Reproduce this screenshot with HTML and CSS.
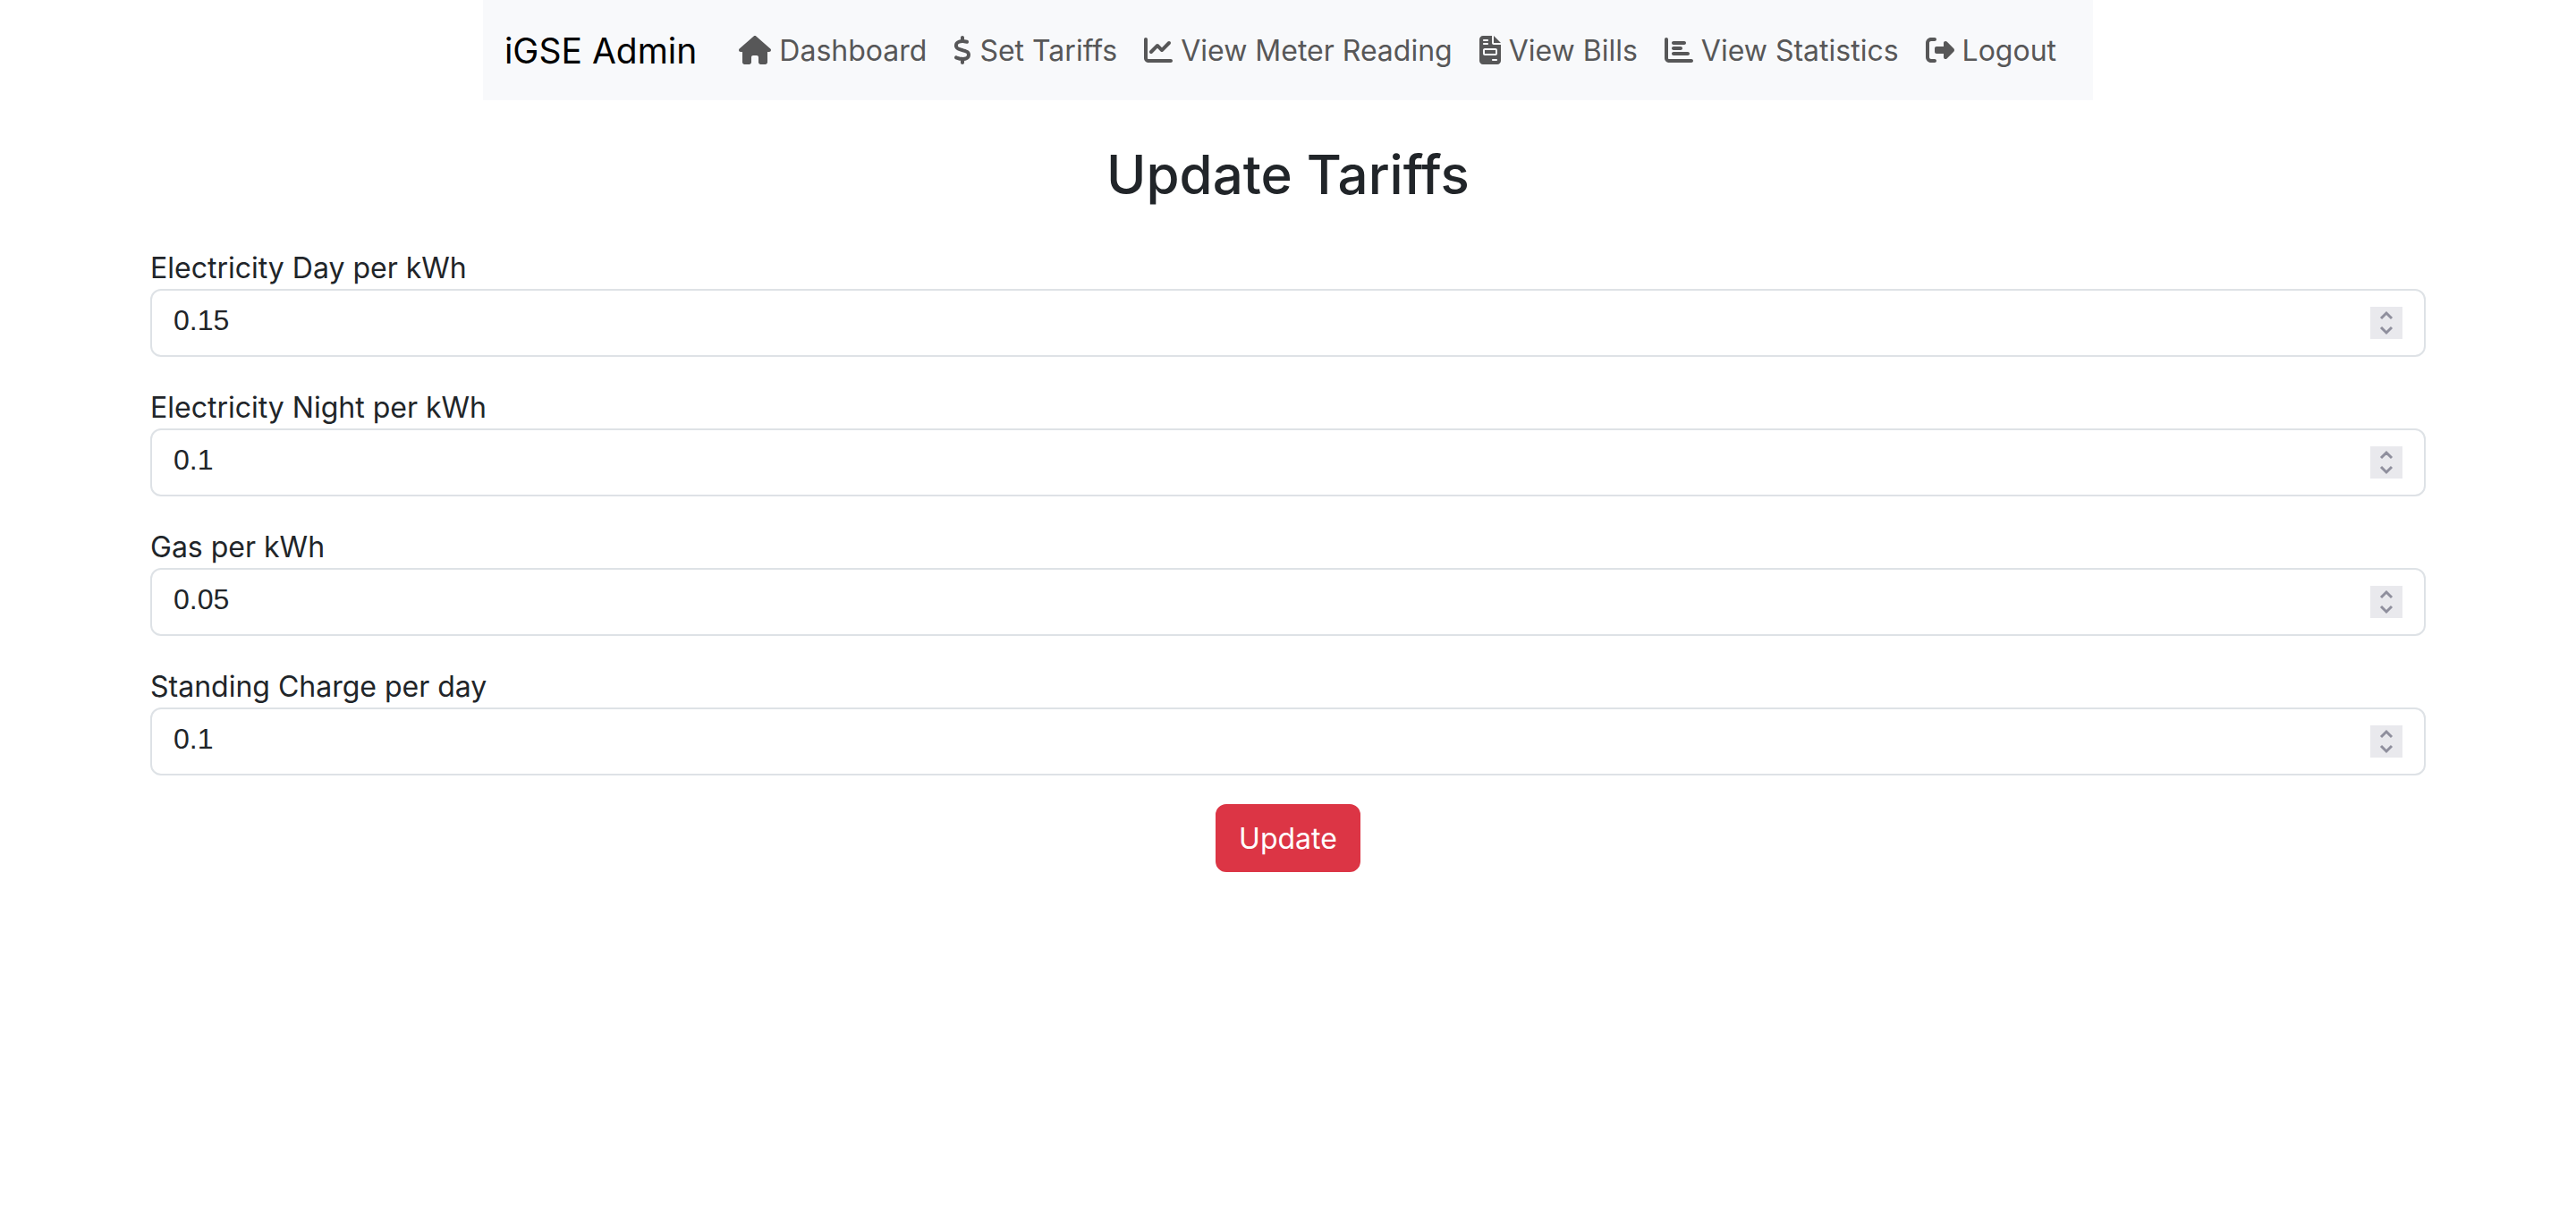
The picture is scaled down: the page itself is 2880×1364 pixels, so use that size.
FILE: index.html
```html
<!DOCTYPE html>
<html lang="en">
<head>
<meta charset="utf-8">
<meta name="viewport" content="width=device-width, initial-scale=1">
<title>iGSE Admin</title>
<link rel="stylesheet" href="styles.css">
</head>
<body>
<nav class="navbar">
  <a class="brand" href="#">iGSE Admin</a>
  <ul class="nav-list">
    <li><a class="nav-link" href="#"><svg class="icon icon-wide" viewBox="0 0 576 512" aria-hidden="true"><path d="M575.8 255.5c0 18-15 32.1-32 32.1h-32l.7 160.2c0 2.7-.2 5.4-.5 8.1V472c0 22.1-17.9 40-40 40H456c-1.1 0-2.2 0-3.3-.1c-1.4 .1-2.8 .1-4.2 .1H416 392c-22.1 0-40-17.9-40-40V448 384c0-17.7-14.3-32-32-32H256c-17.7 0-32 14.3-32 32v64 24c0 22.1-17.9 40-40 40H160 128.1c-1.5 0-3-.1-4.5-.2c-1.2 .1-2.4 .2-3.6 .2H104c-22.1 0-40-17.9-40-40V360c0-.9 0-1.9 .1-2.8V287.6H32c-18 0-32-14-32-32.1c0-9 3-17 10-24L266.4 8c7-7 15-8 22-8s15 2 21 7L564.8 231.5c8 7 12 15 11 24z"/></svg> Dashboard</a></li>
    <li><a class="nav-link" href="#"><svg class="icon icon-narrow" viewBox="0 0 320 512" aria-hidden="true"><path d="M160 0c17.7 0 32 14.3 32 32V67.7c1.6 .2 3.1 .4 4.7 .7c.4 .1 .7 .1 1.1 .2l48 8.8c17.4 3.2 28.9 19.9 25.7 37.2s-19.9 28.9-37.2 25.7l-47.5-8.7c-31.3-4.6-58.9-1.5-78.3 6.2s-27.2 18.3-29 28.1c-2 10.7-.5 16.7 1.2 20.4c1.8 3.9 5.5 8.3 12.8 13.2c16.3 10.7 41.3 17.7 73.7 26.3l2.9 .8c28.6 7.6 63.6 16.8 89.6 33.8c14.2 9.3 27.6 21.9 35.9 39.5c8.5 17.9 10.3 37.9 6.4 59.2c-6.9 38-33.1 63.4-65.6 76.7c-13.7 5.6-28.6 9.2-44.4 11V480c0 17.7-14.3 32-32 32s-32-14.3-32-32V445.1c-.4-.1-.9-.1-1.3-.2l-.2 0 0 0c-24.4-3.8-64.5-14.3-91.5-26.3c-16.1-7.2-23.4-26.1-16.2-42.2s26.1-23.4 42.2-16.2c20.9 9.3 55.3 18.5 75.2 21.6c31.9 4.7 58.2 2 76-5.3c16.9-6.9 24.6-16.9 26.8-28.9c1.9-10.6 .4-16.7-1.3-20.4c-1.9-4-5.6-8.4-13-13.3c-16.4-10.7-41.5-17.7-74-26.3l-2.8-.7 0 0C119.4 279.3 84.4 270 58.4 253c-14.2-9.3-27.5-22-35.8-39.6c-8.4-17.9-10.1-37.9-6.1-59.2C23.7 116 52.3 91.2 84.8 78.3c13.3-5.3 27.9-8.9 43.2-11V32c0-17.7 14.3-32 32-32z"/></svg> Set Tariffs</a></li>
    <li><a class="nav-link" href="#"><svg class="icon" viewBox="0 0 512 512" aria-hidden="true"><path d="M64 64c0-17.7-14.3-32-32-32S0 46.3 0 64V400c0 44.2 35.8 80 80 80H480c17.7 0 32-14.3 32-32s-14.3-32-32-32H80c-8.8 0-16-7.2-16-16V64zm406.6 86.6c12.5-12.5 12.5-32.8 0-45.3s-32.8-12.5-45.3 0L320 210.7l-57.4-57.4c-12.5-12.5-32.8-12.5-45.3 0l-112 112c-12.5 12.5-12.5 32.8 0 45.3s32.8 12.5 45.3 0L240 221.3l57.4 57.4c12.5 12.5 32.8 12.5 45.3 0l128-128z"/></svg> View Meter Reading</a></li>
    <li><a class="nav-link" href="#"><svg class="icon icon-file" viewBox="0 0 384 512" aria-hidden="true"><path fill-rule="evenodd" d="M64 0C28.7 0 0 28.7 0 64V448c0 35.3 28.7 64 64 64H320c35.3 0 64-28.7 64-64V160H256c-17.7 0-32-14.3-32-32V0H64zM256 0V128H384L256 0zM80 64h64c8.8 0 16 7.2 16 16s-7.2 16-16 16H80c-8.8 0-16-7.2-16-16s7.2-16 16-16zm0 64h64c8.8 0 16 7.2 16 16s-7.2 16-16 16H80c-8.8 0-16-7.2-16-16s7.2-16 16-16zm16 96H288c17.7 0 32 14.3 32 32v64c0 17.7-14.3 32-32 32H96c-17.7 0-32-14.3-32-32V256c0-17.7 14.3-32 32-32zm0 32v64H288V256H96zM240 416h64c8.8 0 16 7.2 16 16s-7.2 16-16 16H240c-8.8 0-16-7.2-16-16s7.2-16 16-16z"/></svg> View Bills</a></li>
    <li><a class="nav-link" href="#"><svg class="icon" viewBox="0 0 512 512" aria-hidden="true"><path d="M32 32c17.7 0 32 14.3 32 32V400c0 8.8 7.2 16 16 16H480c17.7 0 32 14.3 32 32s-14.3 32-32 32H80c-44.2 0-80-35.8-80-80V64C0 46.3 14.3 32 32 32zm96 96c0-17.7 14.3-32 32-32l192 0c17.7 0 32 14.3 32 32s-14.3 32-32 32H160c-17.7 0-32-14.3-32-32zm32 64H288c17.7 0 32 14.3 32 32s-14.3 32-32 32H160c-17.7 0-32-14.3-32-32s14.3-32 32-32zm0 96H416c17.7 0 32 14.3 32 32s-14.3 32-32 32H160c-17.7 0-32-14.3-32-32s14.3-32 32-32z"/></svg> View Statistics</a></li>
    <li><a class="nav-link" href="#"><svg class="icon" viewBox="0 0 512 512" aria-hidden="true"><path d="M377.9 105.9L500.7 228.7c7.2 7.2 11.3 17.1 11.3 27.3s-4.1 20.1-11.3 27.3L377.9 406.1c-6.4 6.4-15 9.9-24 9.9c-18.7 0-33.9-15.2-33.9-33.9l0-62.1-128 0c-17.7 0-32-14.3-32-32l0-64c0-17.7 14.3-32 32-32l128 0 0-62.1c0-18.7 15.2-33.9 33.9-33.9c9 0 17.6 3.6 24 9.9zM160 96L96 96c-17.7 0-32 14.3-32 32l0 256c0 17.7 14.3 32 32 32l64 0c17.7 0 32 14.3 32 32s-14.3 32-32 32l-64 0c-53 0-96-43-96-96L0 128C0 75 43 32 96 32l64 0c17.7 0 32 14.3 32 32s-14.3 32-32 32z"/></svg> Logout</a></li>
  </ul>
</nav>
<main class="page">
  <h1 class="title">Update Tariffs</h1>
  <form class="form">
    <div class="field">
      <label for="day">Electricity Day per kWh</label>
      <div class="control">
        <input id="day" type="number" step="any" value="0.15">
        <svg class="stepper" viewBox="0 0 36 36" aria-hidden="true"><path d="M12 13l6-6 6 6M12 23l6 6 6-6"/></svg>
      </div>
    </div>
    <div class="field">
      <label for="night">Electricity Night per kWh</label>
      <div class="control">
        <input id="night" type="number" step="any" value="0.1">
        <svg class="stepper" viewBox="0 0 36 36" aria-hidden="true"><path d="M12 13l6-6 6 6M12 23l6 6 6-6"/></svg>
      </div>
    </div>
    <div class="field">
      <label for="gas">Gas per kWh</label>
      <div class="control">
        <input id="gas" type="number" step="any" value="0.05">
        <svg class="stepper" viewBox="0 0 36 36" aria-hidden="true"><path d="M12 13l6-6 6 6M12 23l6 6 6-6"/></svg>
      </div>
    </div>
    <div class="field">
      <label for="standing">Standing Charge per day</label>
      <div class="control">
        <input id="standing" type="number" step="any" value="0.1">
        <svg class="stepper" viewBox="0 0 36 36" aria-hidden="true"><path d="M12 13l6-6 6 6M12 23l6 6 6-6"/></svg>
      </div>
    </div>
    <button class="submit" type="submit">Update</button>
  </form>
</main>
</body>
</html>
```
FILE: styles.css
```css
* {
  box-sizing: border-box;
}

body {
  margin: 0;
  background: #fff;
  color: #212529;
  font: 400 32px/48px Inter, "Liberation Sans", sans-serif;
}

.navbar {
  display: flex;
  align-items: center;
  width: fit-content;
  margin: 0 auto;
  padding: 17px 26px 15px 24px;
  background: #f8f9fb;
}

.brand {
  margin-right: 32px;
  padding: 10px 0;
  color: #000;
  font-size: 39px;
  line-height: 60px;
  text-decoration: none;
  white-space: nowrap;
}

.nav-list {
  display: flex;
  margin: 0;
  padding: 0;
  list-style: none;
}

.nav-link {
  display: block;
  padding: 16px 15px;
  color: #575758;
  text-decoration: none;
  white-space: nowrap;
}

.icon {
  width: 32px;
  height: 32px;
  fill: currentColor;
  vertical-align: -4px;
}

.icon-wide {
  width: 36px;
}

.icon-narrow {
  width: 20px;
}

.icon-file {
  width: 24px;
}

.page {
  padding: 44px 168px;
}

.title {
  margin: 0 0 41px;
  font-size: 60px;
  font-weight: 500;
  line-height: 78px;
  text-align: center;
}

.form {
  display: flex;
  flex-direction: column;
  gap: 32px;
}

.field {
  display: flex;
  flex-direction: column;
}

.field label {
  height: 48px;
  padding-top: 1px;
}

.control {
  display: flex;
  align-items: center;
  height: 76px;
  padding: 0 24px;
  border: 2px solid #dee2e6;
  border-radius: 12px;
  background: #fff;
}

.control input {
  flex: 1;
  min-width: 0;
  height: 72px;
  padding: 0 0 6px;
  border: 0;
  outline: 0;
  background: none;
  color: inherit;
  font: 400 32px/48px "Liberation Sans", Arial, sans-serif;
  appearance: textfield;
}

.control input::-webkit-inner-spin-button {
  appearance: none;
  margin: 0;
}

.stepper {
  width: 36px;
  height: 36px;
  background: #e9e9ed;
  fill: none;
  stroke: #8f8f9d;
  stroke-width: 3;
}

.submit {
  align-self: center;
  padding: 13px 24px 11px;
  border: 2px solid #dc3545;
  border-radius: 12px;
  background: #dc3545;
  color: #fff;
  font: inherit;
}
```
